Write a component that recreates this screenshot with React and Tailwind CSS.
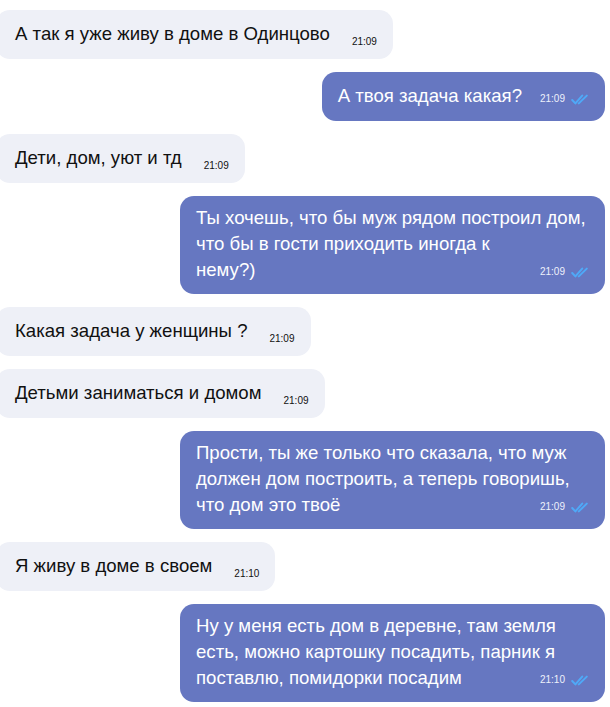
import React from 'react';

const messages = [
  { id: 1, out: false, time: '21:09', lines: ['А так я уже живу в доме в Одинцово'] },
  { id: 2, out: true, time: '21:09', lines: ['А твоя задача какая?'] },
  { id: 3, out: false, time: '21:09', lines: ['Дети, дом, уют и тд'] },
  {
    id: 4,
    out: true,
    time: '21:09',
    lines: ['Ты хочешь, что бы муж рядом построил дом,', 'что бы в гости приходить иногда к', 'нему?)'],
  },
  { id: 5, out: false, time: '21:09', lines: ['Какая задача у женщины ?'] },
  { id: 6, out: false, time: '21:09', lines: ['Детьми заниматься и домом'] },
  {
    id: 7,
    out: true,
    time: '21:09',
    lines: ['Прости, ты же только что сказала, что муж', 'должен дом построить, а теперь говоришь,', 'что дом это твоё'],
  },
  { id: 8, out: false, time: '21:10', lines: ['Я живу в доме в своем'] },
  {
    id: 9,
    out: true,
    time: '21:10',
    lines: ['Ну у меня есть дом в деревне, там земля', 'есть, можно картошку посадить, парник я', 'поставлю, помидорки посадим'],
  },
];

const DoubleCheck = () => (
  <svg width="17" height="11" viewBox="0 0 17 11" fill="none">
    <path d="M1.2 6 L4.4 9.4 L11.2 1.6" stroke="#4fa9f7" strokeWidth="2" strokeLinecap="round" strokeLinejoin="round" />
    <path d="M7.8 9.4 L15.8 1.6" stroke="#4fa9f7" strokeWidth="2" strokeLinecap="round" />
  </svg>
);

const Incoming = ({ msg }) => (
  <div className="self-start -ml-[4px] flex items-end rounded-[14px] bg-[#eef0f7] pl-[19px] pr-[16px] pt-[11px] pb-[12px]">
    <span className="text-[18.6px] leading-[26px] text-[#111]">{msg.lines[0]}</span>
    <span className="ml-[22px] mb-[-1px] text-[10px] leading-[12px] text-[#111]">{msg.time}</span>
  </div>
);

const Outgoing = ({ msg }) => {
  const multi = msg.lines.length > 1;
  return (
    <div
      className={
        'relative self-end rounded-[14px] bg-[#6677c1] pl-[16px] pr-[17px] text-white ' +
        (multi ? 'w-[425px] pt-[9px] pb-[11px]' : 'pt-[11px] pb-[12px]')
      }
    >
      <p className="text-[18.6px] leading-[26px]">
        {msg.lines.map((line, i) => (
          <React.Fragment key={i}>
            {i > 0 && <br />}
            {line}
          </React.Fragment>
        ))}
        <span className="inline-block w-[66px]" />
      </p>
      <div className="absolute right-[17px] bottom-[16px] flex items-center gap-[6px]">
        <span className="text-[10px] leading-[12px] text-[#eef1fb]">{msg.time}</span>
        <DoubleCheck />
      </div>
    </div>
  );
};

export default function App() {
  return (
    <div className="min-h-[707px] overflow-hidden bg-white pt-[10px] pr-[5px]" style={{ fontFamily: '"Liberation Sans", Arial, sans-serif' }}>
      <div className="flex flex-col gap-[13px]">
        {messages.map((m) => (m.out ? <Outgoing key={m.id} msg={m} /> : <Incoming key={m.id} msg={m} />))}
      </div>
    </div>
  );
}
